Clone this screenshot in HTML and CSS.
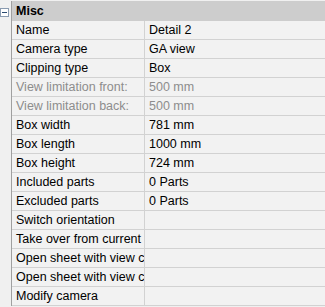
FILE: index.html
```html
<!DOCTYPE html>
<html lang="en">
<head>
    <meta charset="UTF-8">
    <title>Properties</title>
    <link rel="stylesheet" href="styles.css">
</head>
<body>
    <div class="props">
        <!-- Category header -->
        <div class="row head">
            <div class="gutter">
                <svg class="toggle" width="9" height="9" viewBox="0 0 9 9">
                    <rect x="0.5" y="0.5" width="8" height="8" fill="#fff" stroke="#8a9bb0"/>
                    <line x1="2" y1="4.5" x2="7" y2="4.5" stroke="#2b4a70"/>
                </svg>
            </div>
            <div class="cell cat">Misc</div>
        </div>

        <div class="row"><div class="gutter"></div><div class="cell name">Name</div><div class="cell val">Detail 2</div></div>
        <div class="row"><div class="gutter"></div><div class="cell name">Camera type</div><div class="cell val">GA view</div></div>
        <div class="row"><div class="gutter"></div><div class="cell name">Clipping type</div><div class="cell val">Box</div></div>
        <div class="row off"><div class="gutter"></div><div class="cell name">View limitation front:</div><div class="cell val">500 mm</div></div>
        <div class="row off"><div class="gutter"></div><div class="cell name">View limitation back:</div><div class="cell val">500 mm</div></div>
        <div class="row"><div class="gutter"></div><div class="cell name">Box width</div><div class="cell val">781 mm</div></div>
        <div class="row"><div class="gutter"></div><div class="cell name">Box length</div><div class="cell val">1000 mm</div></div>
        <div class="row"><div class="gutter"></div><div class="cell name">Box height</div><div class="cell val">724 mm</div></div>
        <div class="row"><div class="gutter"></div><div class="cell name">Included parts</div><div class="cell val">0 Parts</div></div>
        <div class="row"><div class="gutter"></div><div class="cell name">Excluded parts</div><div class="cell val">0 Parts</div></div>
        <div class="row"><div class="gutter"></div><div class="cell name">Switch orientation</div><div class="cell val"></div></div>
        <div class="row"><div class="gutter"></div><div class="cell name">Take over from current view</div><div class="cell val"></div></div>
        <div class="row"><div class="gutter"></div><div class="cell name">Open sheet with view clipping</div><div class="cell val"></div></div>
        <div class="row"><div class="gutter"></div><div class="cell name">Open sheet with view camera</div><div class="cell val"></div></div>
        <div class="row"><div class="gutter"></div><div class="cell name">Modify camera</div><div class="cell val"></div></div>
    </div>
</body>
</html>
```

FILE: styles.css
```css
body {
    margin: 0;
    background: #f0f0f0;
    font-family: "Liberation Sans", Arial, sans-serif;
    font-size: 12.5px;
    color: #000;
}

.props {
    padding-top: 1px;
}

.row {
    display: flex;
    height: 19px;
}

.gutter {
    width: 11px;
    flex: none;
    border-right: 1px solid #a0a0a0;
    background: #f0f0f0;
}

.cell {
    display: flex;
    align-items: center;
    padding-left: 4px;
    white-space: nowrap;
    overflow: hidden;
    border-bottom: 1px solid #d2d2d2;
    background: #f2f2f2;
}

.name {
    width: 128px;
    flex: none;
    border-right: 1px solid #d2d2d2;
}

.val {
    flex: 1;
}

.off .cell {
    color: #8d8d8d;
}

/* category header */
.head {
    height: 20px;
}
.head .cell {
    border-bottom: none;
}
.cat {
    flex: 1;
    background: #cdcdcd;
    font-weight: bold;
}
.head .gutter {
    position: relative;
}
.toggle {
    position: absolute;
    left: 0;
    top: 7px;
}
```
